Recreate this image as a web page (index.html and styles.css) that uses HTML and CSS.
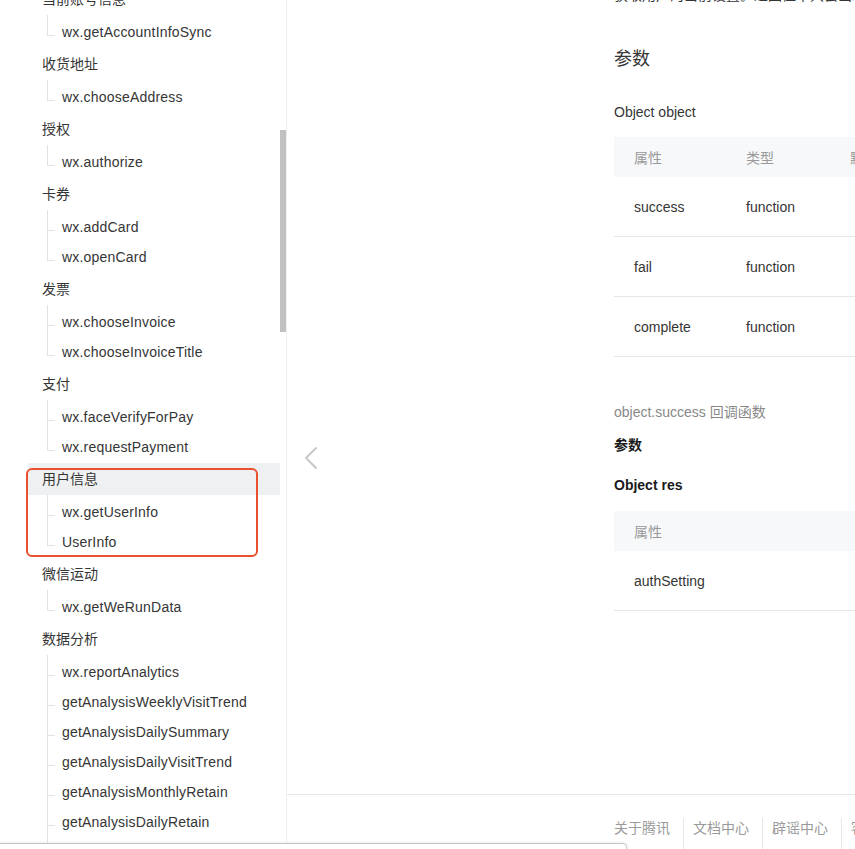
FILE: index.html
```html
<!DOCTYPE html>
<html lang="zh-CN">
<head>
<meta charset="UTF-8" />
<meta name="viewport" content="width=device-width, initial-scale=1" />
<title>wx.getSetting | 微信开放文档</title>
<link rel="stylesheet" href="styles.css">
</head>
<body>
<div class="page">
  <!-- Левое меню -->
  <aside class="sidebar">
    <ul class="menu">
      <li class="group">
        <div class="group-title">当前账号信息</div>
        <ul class="sub"><li>wx.getAccountInfoSync</li></ul>
      </li>
      <li class="group">
        <div class="group-title">收货地址</div>
        <ul class="sub"><li>wx.chooseAddress</li></ul>
      </li>
      <li class="group">
        <div class="group-title">授权</div>
        <ul class="sub"><li>wx.authorize</li></ul>
      </li>
      <li class="group">
        <div class="group-title">卡券</div>
        <ul class="sub"><li>wx.addCard</li><li>wx.openCard</li></ul>
      </li>
      <li class="group">
        <div class="group-title">发票</div>
        <ul class="sub"><li>wx.chooseInvoice</li><li>wx.chooseInvoiceTitle</li></ul>
      </li>
      <li class="group">
        <div class="group-title">支付</div>
        <ul class="sub"><li>wx.faceVerifyForPay</li><li>wx.requestPayment</li></ul>
      </li>
      <li class="group">
        <div class="group-title active">用户信息</div>
        <ul class="sub"><li>wx.getUserInfo</li><li>UserInfo</li></ul>
      </li>
      <li class="group">
        <div class="group-title">微信运动</div>
        <ul class="sub"><li>wx.getWeRunData</li></ul>
      </li>
      <li class="group">
        <div class="group-title">数据分析</div>
        <ul class="sub">
          <li>wx.reportAnalytics</li>
          <li>getAnalysisWeeklyVisitTrend</li>
          <li>getAnalysisDailySummary</li>
          <li>getAnalysisDailyVisitTrend</li>
          <li>getAnalysisMonthlyRetain</li>
          <li>getAnalysisDailyRetain</li>
          <li>getAnalysisWeeklyRetain</li>
          <li>getAnalysisUserPortrait</li>
        </ul>
      </li>
    </ul>
    <div class="scroll-thumb"></div>
  </aside>

  <!-- Основной текст -->
  <main class="main">
    <button class="collapse" type="button" aria-label="收起">
      <svg width="14" height="24" viewBox="0 0 14 24"><path d="M12.5 1.5 L2 12 L12.5 22.5" fill="none" stroke="#c8c8c8" stroke-width="2"/></svg>
    </button>

    <div class="content">
      <p class="lead">获取用户的当前设置。返回值中只会出现小程序已经向用户请求过的权限。</p>

      <h2>参数</h2>
      <p class="label">Object object</p>
      <table class="params">
        <colgroup><col style="width:112px"><col style="width:104px"><col style="width:90px"><col style="width:70px"><col style="width:260px"></colgroup>
        <thead>
          <tr><th>属性</th><th>类型</th><th>默认值</th><th>必填</th><th>说明</th></tr>
        </thead>
        <tbody>
          <tr><td>success</td><td>function</td><td></td><td>否</td><td>接口调用成功的回调函数</td></tr>
          <tr><td>fail</td><td>function</td><td></td><td>否</td><td>接口调用失败的回调函数</td></tr>
          <tr><td>complete</td><td>function</td><td></td><td>否</td><td>接口调用结束的回调函数</td></tr>
        </tbody>
      </table>

      <p class="callback">object.success 回调函数</p>
      <p class="sub-head">参数</p>
      <p class="sub-head obj">Object res</p>
      <table class="params res">
        <colgroup><col style="width:260px"><col style="width:180px"><col style="width:260px"></colgroup>
        <thead>
          <tr><th>属性</th><th>类型</th><th>说明</th></tr>
        </thead>
        <tbody>
          <tr><td>authSetting</td><td>AuthSetting</td><td>用户授权结果</td></tr>
        </tbody>
      </table>
    </div>

    <footer class="footer">
      <a href="#">关于腾讯</a>
      <a href="#">文档中心</a>
      <a href="#">辟谣中心</a>
      <a href="#">客服中心</a>
      <a href="#">联系邮箱</a>
    </footer>
  </main>
</div>

<!-- Пометка на скриншоте -->
<div class="mark"></div>

<div class="status-bubble">https://developers.weixin.qq.com/miniprogram/dev/api/open-api/user-info/wx.getUserInfo.html</div>
</body>
</html>
```

FILE: styles.css
```css
body {
  margin: 0;
  padding: 0;
  font-family: "Liberation Sans", "Noto Sans CJK SC", sans-serif;
  font-size: 14px;
  color: #353535;
  background: #fff;
  overflow: hidden;
}
.page {
  display: flex;
  height: 100vh;
  overflow: hidden;
}

/* Меню слева */
.sidebar {
  flex: none;
  width: 286px;
  border-right: 1px solid #eeeeee;
  position: relative;
  overflow: hidden;
}
.menu {
  list-style: none;
  margin: -17px 0 0;
  padding: 0 6px 0 28px;
}
.group-title {
  height: 32px;
  line-height: 32px;
  padding-left: 14px;
  color: #353535;
}
.group-title.active {
  background: #eff0f2;
}
.sub {
  list-style: none;
  margin: 0;
  padding: 2px 0 1px;
}
.sub li {
  position: relative;
  height: 30px;
  line-height: 30px;
  padding-left: 34px;
  letter-spacing: 0.2px;
  white-space: nowrap;
}
.sub li::before {
  content: "";
  position: absolute;
  left: 19px;
  top: 0;
  width: 7px;
  height: 18px;
  border-left: 1px solid #e2e2e2;
  border-bottom: 1px solid #e2e2e2;
}
.sub li:first-child::before {
  top: -2px;
  height: 20px;
}
.sub li:not(:last-child)::after {
  content: "";
  position: absolute;
  left: 19px;
  top: 18px;
  bottom: 0;
  border-left: 1px solid #e2e2e2;
}
.scroll-thumb {
  position: absolute;
  left: 280px;
  top: 130px;
  width: 6px;
  height: 202px;
  background: #c1c1c1;
}

/* Контент */
.main {
  flex: 1;
  min-width: 0;
  display: flex;
  flex-direction: column;
  position: relative;
  overflow: hidden;
}
.collapse {
  position: absolute;
  left: 17px;
  top: 446px;
  padding: 0;
  border: none;
  background: none;
  cursor: pointer;
}
.collapse svg { display: block; }
.content {
  flex: 1;
  margin-top: -17px;
  padding-left: 327px;
  white-space: nowrap;
}
.content p { margin: 0; }
.lead {
  line-height: 24px;
  color: #353535;
}
.content h2 {
  margin: 39px 0 0;
  font-size: 18px;
  line-height: 26px;
  font-weight: normal;
  color: #353535;
}
.content .label {
  margin-top: 29px;
  line-height: 22px;
}
.params {
  margin-top: 14px;
  border-collapse: collapse;
  table-layout: fixed;
  width: 636px;
}
.params th {
  height: 40px;
  padding: 0 20px;
  background: #f7f8fa;
  color: #999;
  font-weight: normal;
  text-align: left;
}
.params td {
  height: 59px;
  padding: 0 20px;
  border-bottom: 1px solid #e7e7e7;
  color: #353535;
}
.content .callback {
  margin-top: 44px;
  line-height: 22px;
  color: #888;
}
.content .sub-head {
  margin-top: 11px;
  line-height: 22px;
  font-weight: bold;
  color: #1a1a1a;
}
.content .sub-head.obj {
  margin-top: 18px;
}
.params.res {
  margin-top: 15px;
  width: 700px;
}

/* Подвал */
.footer {
  flex: none;
  height: 31px;
  border-top: 1px solid #e7e7e7;
  padding: 23px 0 0 327px;
  display: flex;
  white-space: nowrap;
}
.footer a {
  line-height: 20px;
  color: #9a9a9a;
  text-decoration: none;
  padding: 0 13px 0 9px;
  border-left: 1px solid #e7e7e7;
}
.footer a:first-child {
  padding-left: 0;
  border-left: none;
}

/* Красная рамка поверх меню */
.mark {
  position: fixed;
  left: 26px;
  top: 468px;
  width: 232px;
  height: 89px;
  box-sizing: border-box;
  border: 2px solid #e9502f;
  border-radius: 6px;
  pointer-events: none;
}

/* Строка статуса браузера */
.status-bubble {
  position: fixed;
  left: -1px;
  top: 843px;
  width: 610px;
  height: 30px;
  padding: 3px 8px;
  border: 1px solid #c6c6c6;
  border-top-right-radius: 4px;
  background: #fff;
  box-shadow: 0 0 3px rgba(0,0,0,0.12);
  font-size: 12px;
  color: #333;
  white-space: nowrap;
}
```
